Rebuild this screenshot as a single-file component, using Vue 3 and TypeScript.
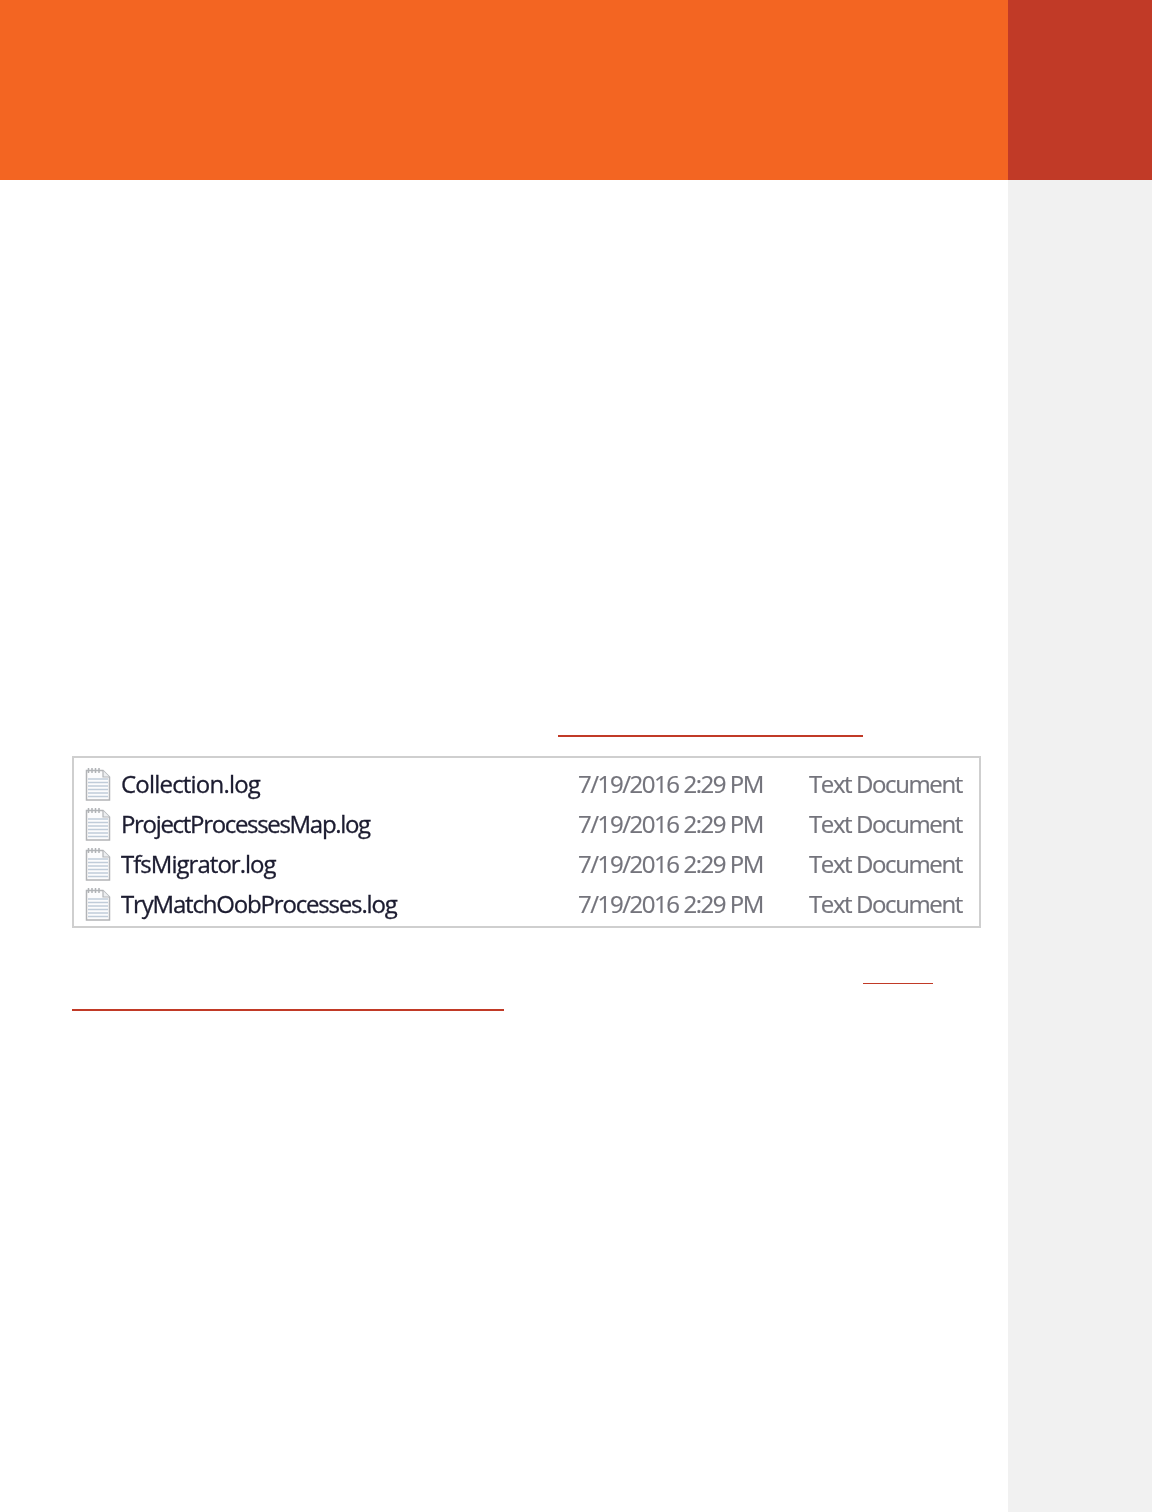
<script setup lang="ts">
interface LogFile {
  name: string
  tracking: number
}
const files: LogFile[] = [
  { name: 'Collection.log', tracking: -0.8 },
  { name: 'ProjectProcessesMap.log', tracking: -1.32 },
  { name: 'TfsMigrator.log', tracking: -0.97 },
  { name: 'TryMatchOobProcesses.log', tracking: -1.18 },
]
const ruleYs: number[] = [12, 15.5, 19, 22.5, 26, 29.5]
</script>

<template>
  <div class="page">
    <main class="main">
      <header class="banner"></header>
      <div class="content">
        <div class="rule rule-first"></div>
        <section class="shot">
          <div v-for="file in files" :key="file.name" class="row">
            <svg class="icon" viewBox="0 0 26 34" width="26" height="34" aria-hidden="true">
              <path d="M1.5 3.5H18L24.5 10V33H1.5Z" fill="#fcfcfd" stroke="#b2b4b7" stroke-width="1.5" />
              <path d="M18 3.5V10H24.5" fill="#eceef0" stroke="#b2b4b7" stroke-width="1.2" />
              <path d="M3.5 1V6M7 1V6M10.5 1V6M14 1V6" stroke="#b0b3b6" stroke-width="1.5" fill="none" />
              <path
                v-for="y in ruleYs"
                :key="y"
                :d="`M3 ${y}H23`"
                stroke="#c0ccd9"
                stroke-width="1.5"
                fill="none"
              />
            </svg>
            <span class="name" :style="{ letterSpacing: `${file.tracking}px` }">{{ file.name }}</span>
            <span class="date">7/19/2016 2:29 PM</span>
            <span class="type">Text Document</span>
          </div>
        </section>
        <div class="rule rule-second"></div>
        <div class="rule rule-third"></div>
      </div>
    </main>
    <aside class="side">
      <div class="side-top"></div>
    </aside>
  </div>
</template>

<style>
html,
body {
  margin: 0;
  background: #ffffff;
}
</style>

<style scoped>
.page {
  display: grid;
  grid-template-columns: 1008px 144px;
  width: 1152px;
  height: 1512px;
  overflow: hidden;
  font-family: "Open Sans", "Noto Sans", sans-serif;
}
.main {
  background: #ffffff;
}
.banner {
  height: 180px;
  background: #f36522;
}
.content {
  padding: 555px 27px 0 72px;
}
.rule {
  height: 2px;
  background: #c13a27;
}
.rule-first {
  width: 305px;
  margin-left: 486px;
}
.shot {
  box-sizing: border-box;
  width: 909px;
  height: 172px;
  margin-top: 19px;
  padding: 7px 0 0 11px;
  border: 2px solid #cfcfcf;
  background: #ffffff;
}
.row {
  display: flex;
  align-items: center;
  height: 40px;
  filter: blur(0.6px);
}
.icon {
  flex: none;
  width: 26px;
  height: 34px;
  margin-top: -2px;
}
.name,
.date,
.type {
  position: relative;
  top: -2px;
  font-size: 24px;
  white-space: nowrap;
}
.name {
  width: 457px;
  margin-left: 10px;
  color: #1c1c30;
  -webkit-text-stroke: 0.3px #1c1c30;
}
.date {
  width: 231px;
  letter-spacing: -1.45px;
  color: #74747c;
  -webkit-text-stroke: 0.2px #74747c;
}
.type {
  letter-spacing: -1.4px;
  color: #74747c;
  -webkit-text-stroke: 0.2px #74747c;
}
.rule-second {
  width: 70px;
  height: 1px;
  margin-top: 55px;
  margin-left: 791px;
}
.rule-third {
  width: 432px;
  margin-top: 25px;
}
.side {
  background: #f1f1f1;
}
.side-top {
  height: 180px;
  background: #c13a27;
}
</style>
